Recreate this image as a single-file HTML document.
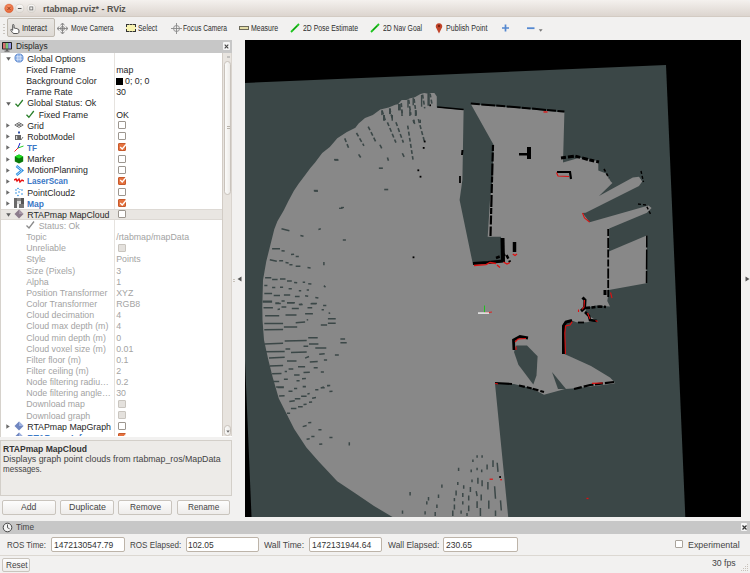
<!DOCTYPE html>
<html><head><meta charset="utf-8">
<style>
*{margin:0;padding:0;box-sizing:border-box}
html,body{width:750px;height:573px;overflow:hidden;background:#F2F1F0;font-family:"Liberation Sans",sans-serif;font-size:9px;color:#3c3c3c}
.a{position:absolute;white-space:nowrap}
.ic{display:block}
#title{left:0;top:0;width:750px;height:16.5px;background:linear-gradient(#F4F1EE,#DCD5CF);border-bottom:1px solid #D3CBC3;border-radius:4px 4px 0 0}
.hdr{background:#C7C7C7}
#tree{left:0;top:53px;width:232px;height:383.5px;background:#fff;border-left:1px solid #D6D2CC;overflow:hidden}
.r{position:absolute;left:0;width:222px;height:12px;line-height:12px;white-space:nowrap}
.t{position:absolute;top:0}
.v{position:absolute;left:116px;top:0}
.g{color:#9b9b9b}
.bl{color:#3d7ac8;font-weight:bold}
.cb{position:absolute;left:118px;width:8px;height:8px;border:1px solid #9C968F;background:#fff;border-radius:1px;top:2px}
.cbd{border-color:#C9C5BF;background:#E4E1DD}
.cbc{background:#E5723F;border-color:#C65A2C}
.arr{position:absolute;left:6px;top:3.5px;width:0;height:0;border-left:3.5px solid #6b6b6b;border-top:2.5px solid transparent;border-bottom:2.5px solid transparent}
.arrd{position:absolute;left:5px;top:4.5px;width:0;height:0;border-top:3.5px solid #6b6b6b;border-left:2.5px solid transparent;border-right:2.5px solid transparent}
.btn{position:absolute;height:15px;border:1px solid #C9C4BD;border-radius:2px;background:linear-gradient(#FDFDFD,#EEECEA);text-align:center;line-height:13px;font-size:9px}
.inp{position:absolute;height:14.5px;border:1px solid #BDB4A9;border-radius:2px;background:#fff;line-height:12.5px;padding-left:3px;font-size:9px}
.tb{position:absolute;top:17px;height:23px;line-height:23px;font-size:9px;color:#3c3c3c}
</style></head><body>
<div id="title" class="a">
  <svg class="a" style="left:0;top:0" width="40" height="17" viewBox="0 0 40 17">
    <defs><linearGradient id="gb" x1="0" y1="0" x2="0" y2="1"><stop offset="0" stop-color="#FBFAF9"/><stop offset="1" stop-color="#E2DFDA"/></linearGradient>
    <radialGradient id="go" cx="0.45" cy="0.35" r="0.7"><stop offset="0" stop-color="#F7956A"/><stop offset="1" stop-color="#E35D2E"/></radialGradient></defs>
    <circle cx="9" cy="8.4" r="4.3" fill="url(#go)" stroke="#D4582E" stroke-width="0.4"/>
    <path d="M7.4 6.8 L10.6 10 M10.6 6.8 L7.4 10" stroke="#8E3A1A" stroke-width="0.9"/>
    <circle cx="19.7" cy="8.4" r="4.1" fill="url(#gb)" stroke="#CFCAC3" stroke-width="0.6"/>
    <path d="M17.9 8.5 L21.5 8.5" stroke="#555" stroke-width="1"/>
    <circle cx="31.3" cy="8.4" r="4.1" fill="url(#gb)" stroke="#CFCAC3" stroke-width="0.6"/>
    <rect x="29.8" y="6.9" width="3" height="3" fill="none" stroke="#6a6a6a" stroke-width="0.8"/>
  </svg>
</div>
  </div>
<div class="a" style="left:3px;top:24px;width:2px;height:10px;background:repeating-linear-gradient(#C9C5BF 0 1px,transparent 1px 3px)"></div>
<div class="a" style="left:7.3px;top:18px;width:47.4px;height:19px;border:1px solid #BEB8AF;border-radius:2px;background:linear-gradient(#E9E7E4,#DEDAD5)"></div>
<svg class="a" style="left:10px;top:24px" width="10" height="10" viewBox="0 0 10 10"><path d="M2.8 0.6 C3.4 0.3 4 0.6 4 1.2 L4 4.2 L4.6 4 C5.1 3.8 5.6 4.1 5.6 4.5 L6.1 4.4 C6.6 4.3 7.1 4.6 7.1 5 L7.5 5 C8.1 5 8.9 5.3 8.9 6 L8.9 8 C8.9 9 8.2 9.5 7.2 9.5 L4 9.5 C3.2 9.5 2.6 9 2.3 8.4 L0.8 6.2 C0.5 5.7 1 5.2 1.5 5.5 L2.7 6.3 L2.7 1.2 Z" fill="#fff" stroke="#3a3a3a" stroke-width="0.85"/></svg>
<svg class="a" style="left:57px;top:23px" width="11" height="11" viewBox="0 0 11 11"><path d="M5.5 0.5 L5.5 10.5 M0.5 5.5 L10.5 5.5" stroke="#777" stroke-width="0.8"/><path d="M3.5 2 L5.5 0.3 L7.5 2 M3.5 9 L5.5 10.7 L7.5 9 M2 3.5 L0.3 5.5 L2 7.5 M9 3.5 L10.7 5.5 L9 7.5" stroke="#666" stroke-width="0.9" fill="none"/><circle cx="5.5" cy="5.5" r="2" fill="none" stroke="#777" stroke-width="0.8"/></svg>
<div class="a" style="left:126px;top:23.5px;width:10px;height:8.5px;background:#F8F3B0;border:1px dashed #333"></div>
<svg class="a" style="left:171px;top:23px" width="11" height="11" viewBox="0 0 11 11"><path d="M5.5 0 L5.5 11 M0 5.5 L11 5.5" stroke="#888" stroke-width="0.9"/><circle cx="5.5" cy="5.5" r="3" fill="none" stroke="#888" stroke-width="0.9"/></svg>
<div class="a" style="left:239px;top:26px;width:10px;height:4px;background:#E4DDA8;border:1px solid #6d6a5a"></div>
<svg class="a" style="left:290px;top:23px" width="10" height="10" viewBox="0 0 10 10"><path d="M1 9 L9 1" stroke="#1ec41e" stroke-width="1.8"/><path d="M3 7 L7 3" stroke="#0a800a" stroke-width="0.8"/></svg>
<svg class="a" style="left:370px;top:23px" width="10" height="10" viewBox="0 0 10 10"><path d="M1 9 L9 1" stroke="#1ec41e" stroke-width="1.8"/><path d="M3 7 L7 3" stroke="#0a800a" stroke-width="0.8"/></svg>
<svg class="a" style="left:434.5px;top:22px" width="8" height="12" viewBox="0 0 8 12"><path d="M4 11.5 L1 5.5 A3.2 3.2 0 1 1 7 5.5 Z" fill="#C2452A"/><circle cx="4" cy="4" r="1.2" fill="#7a2010"/></svg>
<svg class="a" style="left:500.5px;top:24px" width="9" height="8" viewBox="0 0 9 8"><path d="M4.5 0.6 L4.5 7.4 M1 4 L8 4" stroke="#5588d0" stroke-width="1.7"/></svg>
<svg class="a" style="left:526px;top:26px" width="18" height="8" viewBox="0 0 18 8"><path d="M1 2.2 L8.5 2.2" stroke="#5588d0" stroke-width="1.8"/><path d="M12.8 3.2 L16.6 3.2 L14.7 5.8Z" fill="#777"/></svg>

<div class="a hdr" style="left:0;top:40px;width:232px;height:13px"></div>
<div id="tree" class="a"></div>
<div class="a" style="left:0;top:53px;width:222px;height:383.3px;overflow:hidden"><div class="a" style="left:0;top:-53px;width:222px;height:573px">
<div class="a" style="left:114.2px;top:53px;width:1px;height:384px;background:#E6E3DF"></div>
<svg class="a" style="left:5.5px;top:57.00px" width="5" height="4" viewBox="0 0 5 4"><path d="M0.2 0.3 L4.8 0.3 L2.5 3.7Z" fill="#5e5e5e"/></svg>
<div class="a" style="left:13.5px;top:53.20px"><svg class="ic" width="10" height="10" viewBox="0 0 10 10"><circle cx="5" cy="5" r="4.1" fill="#7aa3e0"/><path d="M1.5 3.5 H8.5 M1.2 5 H8.8 M1.5 6.5 H8.5 M3.5 1.3 V8.7 M5 1 V9 M6.5 1.3 V8.7" stroke="#dde8f8" stroke-width="0.6"/><circle cx="5" cy="5" r="4.1" fill="none" stroke="#5a86cc" stroke-width="0.8"/></svg></div>
<div class="a" style="left:116.3px;top:77.50px;width:7px;height:7px;background:#000"></div>
<svg class="a" style="left:5.5px;top:101.60px" width="5" height="4" viewBox="0 0 5 4"><path d="M0.2 0.3 L4.8 0.3 L2.5 3.7Z" fill="#5e5e5e"/></svg>
<div class="a" style="left:13.5px;top:97.80px"><svg class="ic" width="10" height="10" viewBox="0 0 10 10"><path d="M1.5 5.8 L3.9 8.3 L8.8 2" stroke="#2a7f2a" stroke-width="1.3" fill="none"/></svg></div>
<div class="a" style="left:25px;top:108.95px"><svg class="ic" width="10" height="10" viewBox="0 0 10 10"><path d="M1.5 5.8 L3.9 8.3 L8.8 2" stroke="#2a7f2a" stroke-width="1.3" fill="none"/></svg></div>
<svg class="a" style="left:6px;top:123.10px" width="4" height="5" viewBox="0 0 4 5"><path d="M0.3 0.2 L0.3 4.8 L3.8 2.5Z" fill="#6a6a6a"/></svg>
<div class="a" style="left:13.5px;top:120.10px"><svg class="ic" width="10" height="10" viewBox="0 0 10 10"><path d="M0.8 5 L5 2.6 L9.2 5 L5 7.4 Z M2.9 3.8 L7.1 6.2 M7.1 3.8 L2.9 6.2" stroke="#4a4a4a" stroke-width="0.8" fill="none"/></svg></div>
<div class="a cb" style="top:121.10px"></div>
<svg class="a" style="left:6px;top:134.25px" width="4" height="5" viewBox="0 0 4 5"><path d="M0.3 0.2 L0.3 4.8 L3.8 2.5Z" fill="#6a6a6a"/></svg>
<div class="a" style="left:13.5px;top:131.25px"><svg class="ic" width="10" height="10" viewBox="0 0 10 10"><rect x="4" y="0.5" width="2" height="2" fill="#3355aa"/><rect x="1" y="4" width="6" height="5" fill="#666"/><rect x="2" y="5" width="1.2" height="3" fill="#ddd"/><path d="M7 9 L9 6" stroke="#555" stroke-width="0.8"/></svg></div>
<div class="a cb" style="top:132.25px"></div>
<svg class="a" style="left:6px;top:145.40px" width="4" height="5" viewBox="0 0 4 5"><path d="M0.3 0.2 L0.3 4.8 L3.8 2.5Z" fill="#6a6a6a"/></svg>
<div class="a" style="left:13.5px;top:142.40px"><svg class="ic" width="10" height="10" viewBox="0 0 10 10"><path d="M4 6 L0.5 9.5" stroke="#e22" stroke-width="1"/><path d="M4 6 L9.5 4" stroke="#2c2" stroke-width="1"/><path d="M4 6 L6 1" stroke="#22c" stroke-width="1"/></svg></div>
<div class="a cb cbc" style="top:143.40px"><svg width="8" height="8" viewBox="0 0 8 8" style="position:absolute;left:-0.5px;top:-1.5px"><path d="M1.2 4 L3.2 6 L7.5 1" stroke="#fff" stroke-width="1.3" fill="none"/></svg></div>
<svg class="a" style="left:6px;top:156.55px" width="4" height="5" viewBox="0 0 4 5"><path d="M0.3 0.2 L0.3 4.8 L3.8 2.5Z" fill="#6a6a6a"/></svg>
<div class="a" style="left:13.5px;top:153.55px"><svg class="ic" width="10" height="10" viewBox="0 0 10 10"><path d="M5 0.5 L9.2 2.5 L9.2 7.5 L5 9.5 L0.8 7.5 L0.8 2.5Z" fill="#0a7a0a"/><path d="M5 0.5 L9.2 2.5 L5 4.5 L0.8 2.5Z" fill="#22e022"/></svg></div>
<div class="a cb" style="top:154.55px"></div>
<svg class="a" style="left:6px;top:167.70px" width="4" height="5" viewBox="0 0 4 5"><path d="M0.3 0.2 L0.3 4.8 L3.8 2.5Z" fill="#6a6a6a"/></svg>
<div class="a" style="left:13.5px;top:164.70px"><svg class="ic" width="10" height="11" viewBox="0 0 10 11"><path d="M2.5 1 L8 5.5 L2.5 10" stroke="#2a8ee0" stroke-width="2.6" fill="none"/><path d="M2.5 1 L8 5.5 L2.5 10" stroke="#bfe0fa" stroke-width="0.9" fill="none"/></svg></div>
<div class="a cb" style="top:165.70px"></div>
<svg class="a" style="left:6px;top:178.85px" width="4" height="5" viewBox="0 0 4 5"><path d="M0.3 0.2 L0.3 4.8 L3.8 2.5Z" fill="#6a6a6a"/></svg>
<div class="a" style="left:13.5px;top:175.85px"><svg class="ic" width="10" height="10" viewBox="0 0 10 10"><path d="M0 4 L2 3 L3 5 L5 3 L6 6 L8 4 L10 5" stroke="#e81010" stroke-width="1.4" fill="none"/></svg></div>
<div class="a cb cbc" style="top:176.85px"><svg width="8" height="8" viewBox="0 0 8 8" style="position:absolute;left:-0.5px;top:-1.5px"><path d="M1.2 4 L3.2 6 L7.5 1" stroke="#fff" stroke-width="1.3" fill="none"/></svg></div>
<svg class="a" style="left:6px;top:190.00px" width="4" height="5" viewBox="0 0 4 5"><path d="M0.3 0.2 L0.3 4.8 L3.8 2.5Z" fill="#6a6a6a"/></svg>
<div class="a" style="left:13.5px;top:187.00px"><svg class="ic" width="10" height="10" viewBox="0 0 10 10" fill="#2a8ee0"><circle cx="2" cy="3" r="0.8"/><circle cx="4" cy="1.5" r="0.8"/><circle cx="2" cy="6" r="0.8"/><circle cx="5" cy="5" r="0.8"/><circle cx="8" cy="3" r="0.8"/><circle cx="8" cy="7" r="0.8"/><circle cx="4" cy="8.5" r="0.8"/><circle cx="6" cy="2.5" r="0.6"/></svg></div>
<div class="a cb" style="top:188.00px"></div>
<svg class="a" style="left:6px;top:201.15px" width="4" height="5" viewBox="0 0 4 5"><path d="M0.3 0.2 L0.3 4.8 L3.8 2.5Z" fill="#6a6a6a"/></svg>
<div class="a" style="left:13.5px;top:198.15px"><svg class="ic" width="10" height="10" viewBox="0 0 10 10"><rect x="0" y="0" width="10" height="10" fill="#d8d8d8"/><rect x="0" y="0" width="3" height="10" fill="#6a6a6a"/><rect x="3" y="0" width="4" height="3" fill="#8a8a8a"/><rect x="7" y="0" width="3" height="6" fill="#555"/><rect x="3" y="6" width="2" height="4" fill="#f4f4f4"/><rect x="5" y="6" width="5" height="4" fill="#777"/></svg></div>
<div class="a cb cbc" style="top:199.15px"><svg width="8" height="8" viewBox="0 0 8 8" style="position:absolute;left:-0.5px;top:-1.5px"><path d="M1.2 4 L3.2 6 L7.5 1" stroke="#fff" stroke-width="1.3" fill="none"/></svg></div>
<div class="a" style="left:1px;top:209.30px;width:221px;height:11.2px;background:#E9E6E2;border-top:1px solid #DDD9D4;border-bottom:1px solid #DDD9D4"></div>
<svg class="a" style="left:5.5px;top:213.10px" width="5" height="4" viewBox="0 0 5 4"><path d="M0.2 0.3 L4.8 0.3 L2.5 3.7Z" fill="#5e5e5e"/></svg>
<div class="a" style="left:13.5px;top:209.30px"><svg class="ic" width="10" height="10" viewBox="0 0 10 10"><path d="M5 0.5 L9.5 5 L5 9.5 L0.5 5Z" fill="#8b7b8b"/><path d="M5 0.5 L9.5 5 L5 5 Z" fill="#a898a8"/></svg></div>
<div class="a cb" style="top:210.30px"></div>
<div class="a" style="left:25px;top:220.45px"><svg class="ic" width="10" height="10" viewBox="0 0 10 10"><path d="M1.5 5.5 L4 8 L9 1.5" stroke="#8a8a8a" stroke-width="1.3" fill="none"/></svg></div>
<div class="a cb cbd" style="top:243.75px"></div>
<div class="a cb cbd" style="top:399.85px"></div>
<div class="a cb cbd" style="top:411.00px"></div>
<svg class="a" style="left:6px;top:424.15px" width="4" height="5" viewBox="0 0 4 5"><path d="M0.3 0.2 L0.3 4.8 L3.8 2.5Z" fill="#6a6a6a"/></svg>
<div class="a" style="left:13.5px;top:421.15px"><svg class="ic" width="10" height="10" viewBox="0 0 10 10"><path d="M5 0.5 L9.5 5 L5 9.5 L0.5 5Z" fill="#6f86c0"/><path d="M5 0.5 L9.5 5 L5 5 Z" fill="#9fb2e0"/></svg></div>
<div class="a cb" style="top:422.15px"></div>
<svg class="a" style="left:5.5px;top:436.10px" width="5" height="4" viewBox="0 0 5 4"><path d="M0.2 0.3 L4.8 0.3 L2.5 3.7Z" fill="#5e5e5e"/></svg>
<div class="a" style="left:13.5px;top:432.30px"><svg class="ic" width="10" height="10" viewBox="0 0 10 10"><path d="M5 0.5 L9.5 5 L5 9.5 L0.5 5Z" fill="#6f86c0"/><path d="M5 0.5 L9.5 5 L5 5 Z" fill="#9fb2e0"/></svg></div>
<div class="a cb cbc" style="top:433.30px"><svg width="8" height="8" viewBox="0 0 8 8" style="position:absolute;left:-0.5px;top:-1.5px"><path d="M1.2 4 L3.2 6 L7.5 1" stroke="#fff" stroke-width="1.3" fill="none"/></svg></div>
<div class="a" style="left:27.2px;top:54.75px;font-size:8.8px;line-height:8.8px;color:#262626;">Global Options</div>
<div class="a" style="left:26.2px;top:65.90px;font-size:8.8px;line-height:8.8px;color:#262626;">Fixed Frame</div>
<div class="a" style="left:116.2px;top:65.90px;font-size:8.8px;line-height:8.8px;color:#262626;">map</div>
<div class="a" style="left:26.2px;top:77.05px;font-size:8.8px;line-height:8.8px;color:#262626;">Background Color</div>
<div class="a" style="left:125px;top:77.05px;font-size:8.8px;line-height:8.8px;color:#262626;">0; 0; 0</div>
<div class="a" style="left:26.2px;top:88.20px;font-size:8.8px;line-height:8.8px;color:#262626;">Frame Rate</div>
<div class="a" style="left:116.2px;top:88.20px;font-size:8.8px;line-height:8.8px;color:#262626;">30</div>
<div class="a" style="left:27.2px;top:99.35px;font-size:8.8px;line-height:8.8px;color:#262626;">Global Status: Ok</div>
<div class="a" style="left:38.7px;top:110.50px;font-size:8.8px;line-height:8.8px;color:#262626;">Fixed Frame</div>
<div class="a" style="left:116.2px;top:110.50px;font-size:8.8px;line-height:8.8px;color:#262626;">OK</div>
<div class="a" style="left:27.2px;top:121.65px;font-size:8.8px;line-height:8.8px;color:#262626;">Grid</div>
<div class="a" style="left:27.2px;top:132.80px;font-size:8.8px;line-height:8.8px;color:#262626;">RobotModel</div>
<div class="a" style="left:27.2px;top:143.95px;font-size:8.8px;line-height:8.8px;font-weight:bold;color:#3b78c6;transform:scaleX(0.9302);transform-origin:0 0;">TF</div>
<div class="a" style="left:27.2px;top:155.10px;font-size:8.8px;line-height:8.8px;color:#262626;">Marker</div>
<div class="a" style="left:27.2px;top:166.25px;font-size:8.8px;line-height:8.8px;color:#262626;">MotionPlanning</div>
<div class="a" style="left:27.2px;top:177.40px;font-size:8.8px;line-height:8.8px;font-weight:bold;color:#3b78c6;transform:scaleX(0.9213);transform-origin:0 0;">LaserScan</div>
<div class="a" style="left:27.2px;top:188.55px;font-size:8.8px;line-height:8.8px;color:#262626;">PointCloud2</div>
<div class="a" style="left:27.2px;top:199.70px;font-size:8.8px;line-height:8.8px;font-weight:bold;color:#3b78c6;transform:scaleX(0.9654);transform-origin:0 0;">Map</div>
<div class="a" style="left:27.2px;top:210.85px;font-size:8.8px;line-height:8.8px;color:#262626;">RTAPmap MapCloud</div>
<div class="a" style="left:38.7px;top:222.00px;font-size:8.8px;line-height:8.8px;color:#a3a3a3;">Status: Ok</div>
<div class="a" style="left:26.2px;top:233.15px;font-size:8.8px;line-height:8.8px;color:#a3a3a3;">Topic</div>
<div class="a" style="left:116.2px;top:233.15px;font-size:8.8px;line-height:8.8px;color:#a3a3a3;">/rtabmap/mapData</div>
<div class="a" style="left:26.2px;top:244.30px;font-size:8.8px;line-height:8.8px;color:#a3a3a3;">Unreliable</div>
<div class="a" style="left:26.2px;top:255.45px;font-size:8.8px;line-height:8.8px;color:#a3a3a3;">Style</div>
<div class="a" style="left:116.2px;top:255.45px;font-size:8.8px;line-height:8.8px;color:#a3a3a3;">Points</div>
<div class="a" style="left:26.2px;top:266.60px;font-size:8.8px;line-height:8.8px;color:#a3a3a3;">Size (Pixels)</div>
<div class="a" style="left:116.2px;top:266.60px;font-size:8.8px;line-height:8.8px;color:#a3a3a3;">3</div>
<div class="a" style="left:26.2px;top:277.75px;font-size:8.8px;line-height:8.8px;color:#a3a3a3;">Alpha</div>
<div class="a" style="left:116.2px;top:277.75px;font-size:8.8px;line-height:8.8px;color:#a3a3a3;">1</div>
<div class="a" style="left:26.2px;top:288.90px;font-size:8.8px;line-height:8.8px;color:#a3a3a3;">Position Transformer</div>
<div class="a" style="left:116.2px;top:288.90px;font-size:8.8px;line-height:8.8px;color:#a3a3a3;">XYZ</div>
<div class="a" style="left:26.2px;top:300.05px;font-size:8.8px;line-height:8.8px;color:#a3a3a3;">Color Transformer</div>
<div class="a" style="left:116.2px;top:300.05px;font-size:8.8px;line-height:8.8px;color:#a3a3a3;">RGB8</div>
<div class="a" style="left:26.2px;top:311.20px;font-size:8.8px;line-height:8.8px;color:#a3a3a3;">Cloud decimation</div>
<div class="a" style="left:116.2px;top:311.20px;font-size:8.8px;line-height:8.8px;color:#a3a3a3;">4</div>
<div class="a" style="left:26.2px;top:322.35px;font-size:8.8px;line-height:8.8px;color:#a3a3a3;">Cloud max depth (m)</div>
<div class="a" style="left:116.2px;top:322.35px;font-size:8.8px;line-height:8.8px;color:#a3a3a3;">4</div>
<div class="a" style="left:26.2px;top:333.50px;font-size:8.8px;line-height:8.8px;color:#a3a3a3;">Cloud min depth (m)</div>
<div class="a" style="left:116.2px;top:333.50px;font-size:8.8px;line-height:8.8px;color:#a3a3a3;">0</div>
<div class="a" style="left:26.2px;top:344.65px;font-size:8.8px;line-height:8.8px;color:#a3a3a3;">Cloud voxel size (m)</div>
<div class="a" style="left:116.2px;top:344.65px;font-size:8.8px;line-height:8.8px;color:#a3a3a3;">0.01</div>
<div class="a" style="left:26.2px;top:355.80px;font-size:8.8px;line-height:8.8px;color:#a3a3a3;">Filter floor (m)</div>
<div class="a" style="left:116.2px;top:355.80px;font-size:8.8px;line-height:8.8px;color:#a3a3a3;">0.1</div>
<div class="a" style="left:26.2px;top:366.95px;font-size:8.8px;line-height:8.8px;color:#a3a3a3;">Filter ceiling (m)</div>
<div class="a" style="left:116.2px;top:366.95px;font-size:8.8px;line-height:8.8px;color:#a3a3a3;">2</div>
<div class="a" style="left:26.2px;top:378.10px;font-size:8.8px;line-height:8.8px;color:#a3a3a3;">Node filtering radiu…</div>
<div class="a" style="left:116.2px;top:378.10px;font-size:8.8px;line-height:8.8px;color:#a3a3a3;">0.2</div>
<div class="a" style="left:26.2px;top:389.25px;font-size:8.8px;line-height:8.8px;color:#a3a3a3;">Node filtering angle…</div>
<div class="a" style="left:116.2px;top:389.25px;font-size:8.8px;line-height:8.8px;color:#a3a3a3;">30</div>
<div class="a" style="left:26.2px;top:400.40px;font-size:8.8px;line-height:8.8px;color:#a3a3a3;">Download map</div>
<div class="a" style="left:26.2px;top:411.55px;font-size:8.8px;line-height:8.8px;color:#a3a3a3;">Download graph</div>
<div class="a" style="left:27.2px;top:422.70px;font-size:8.8px;line-height:8.8px;color:#262626;">RTAPmap MapGraph</div>
<div class="a" style="left:27.2px;top:433.85px;font-size:8.8px;line-height:8.8px;font-weight:bold;color:#3b78c6;">RTAPmap Info</div>
</div></div>
<div class="a" style="left:0;top:440px;width:232px;height:55.5px;background:#EDEBE8;border:1px solid #D3CFC9"></div>
<div class="btn" style="left:2px;top:499.5px;width:54px"></div>
<div class="btn" style="left:60px;top:499.5px;width:54px"></div>
<div class="btn" style="left:118.4px;top:499.5px;width:54px"></div>
<div class="btn" style="left:177px;top:499.5px;width:53px"></div>
<div class="a" style="left:245px;top:40px;width:496px;height:476.5px;background:#000;overflow:hidden" id="view">
<svg class="a" style="left:0;top:0" width="496" height="476.5" viewBox="245 40 496 476.5">
<polygon points="233.4,83.5 666,65 688,580 255,600" fill="#3b4747"/>
<polygon points="392.5,517 374,506 355.6,493.6 337.2,481.3 318.7,461.4 306.4,447.5 294.2,429 286.5,413.7 278.8,398.4 272.6,376.9 268,358.4 264,340 262.5,320 262.3,306.7 263,280 266.3,261.3 270.3,245.3 274.3,229.3 277.4,221.3 283.7,210.4 288.4,200.9 293.9,190.7 298.6,183.7 304.1,176.6 310.4,168 315.1,162.5 322.2,153 329.8,146.9 337.3,138.3 346.9,131.9 355.4,127.7 358.6,123.4 365,118.1 372.8,115.1 380.3,109.5 388.7,107.6 395.2,104.8 398,104.3 401.7,100.1 406.4,100.1 410.1,98.3 414.8,97.3 420.4,94.1 424.2,93.1 427,93.6 428.8,93.1 434.4,93.1 436.8,96.4 436.8,107.6 437.2,107.6 463.6,110 462.4,180 459.6,200 473,264.8 502.3,262.3 502.3,258.7 501,236.7 487.7,236.7 490,200 492.4,180 493.6,144.8 470.8,104 564.4,112.4 563,162.6 579.4,157.8 598.3,161 598.3,170.4 606.1,173.5 610.8,181.4 612.4,183 599,196 632.8,177.5 639,176.7 642.2,181.4 639,186.1 585.7,212.8 582.6,213 589.6,222.2 648.5,205.5 651.6,208 647,212.8 609.2,228.5 608.6,293 607.3,301 610,306.5 596,305.5 586.7,307.4 585,313 596,320.5 586.7,322.3 576.5,322.3 571.8,320.5 564.3,322.3 562,327 562,345 564.3,354 571.7,357.3 591,365.9 610,377.6 614.4,382 614.4,383.5 576,388.3 565,389 544,394.7 531.2,388.3 514,384 495,383.5 508.2,517" fill="#888888"/>
<polygon points="608.8,251.6 647.2,235.3 646.2,283.3 608.8,290" fill="#888888"/>
<polygon points="516.3,345.6 527,345.6 537.6,356.3 536.5,375.5 533.3,384.5 518.4,364.8 514,352" fill="#3b4747"/>
<polygon points="552,372 558,389 566,389" fill="#3b4747"/>
<polyline points="382.06666666666666,110.6 385.26666666666665,120.2" fill="none" stroke="#3b4747" stroke-width="1.6" stroke-dasharray="4 2.2" />
<polyline points="389.5333333333333,108.46666666666667 392.73333333333335,120.2" fill="none" stroke="#3b4747" stroke-width="1.6" stroke-dasharray="4 2.2" />
<polyline points="401.26666666666665,103.13333333333333 402.3333333333333,115.93333333333334" fill="none" stroke="#3b4747" stroke-width="1.6" stroke-dasharray="4 2.2" />
<polyline points="408.73333333333335,99.93333333333334 410.8666666666667,114.86666666666667" fill="none" stroke="#3b4747" stroke-width="1.6" stroke-dasharray="4 2.2" />
<polyline points="414.06666666666666,98.86666666666667 416.2,114.86666666666667" fill="none" stroke="#3b4747" stroke-width="1.6" stroke-dasharray="4 2.2" />
<polyline points="422.6,94.6 424.73333333333335,108.46666666666667" fill="none" stroke="#3b4747" stroke-width="1.6" stroke-dasharray="4 2.2" />
<polyline points="430.06666666666666,93.53333333333333 432.2,105.26666666666667" fill="none" stroke="#3b4747" stroke-width="1.6" stroke-dasharray="4 2.2" />
<polyline points="356.4666666666667,133.0 363.93333333333334,145.8" fill="none" stroke="#3b4747" stroke-width="1.6" stroke-dasharray="4 2.2" />
<polyline points="368.2,126.6 375.6666666666667,141.53333333333333" fill="none" stroke="#3b4747" stroke-width="1.6" stroke-dasharray="4 2.2" />
<polyline points="387.4,122.33333333333334 395.93333333333334,142.6" fill="none" stroke="#3b4747" stroke-width="1.6" stroke-dasharray="4 2.2" />
<polyline points="395.93333333333334,122.33333333333334 403.4,142.6" fill="none" stroke="#3b4747" stroke-width="1.6" stroke-dasharray="4 2.2" />
<polyline points="407.6666666666667,125.53333333333333 413.0,159.66666666666669" fill="none" stroke="#3b4747" stroke-width="1.6" stroke-dasharray="4 2.2" />
<polyline points="413.0,120.2 415.1333333333333,124.46666666666667" fill="none" stroke="#3b4747" stroke-width="1.6" stroke-dasharray="4 2.2" />
<polyline points="418.33333333333337,119.13333333333333 424.73333333333335,142.6" fill="none" stroke="#3b4747" stroke-width="1.6" stroke-dasharray="4 2.2" />
<polyline points="344.73333333333335,138.33333333333334 349.0,149.0" fill="none" stroke="#3b4747" stroke-width="1.6" stroke-dasharray="4 2.2" />
<polyline points="379.93333333333334,144.73333333333335 382.06666666666666,149.0" fill="none" stroke="#3b4747" stroke-width="1.6" stroke-dasharray="4 2.2" />
<polyline points="358.6,154.33333333333331 360.73333333333335,157.53333333333333" fill="none" stroke="#3b4747" stroke-width="1.6" stroke-dasharray="4 2.2" />
<polyline points="387.4,157.53333333333333 388.4666666666667,160.73333333333335" fill="none" stroke="#3b4747" stroke-width="1.6" stroke-dasharray="4 2.2" />
<polyline points="402.3333333333333,153.26666666666665 404.4666666666667,157.53333333333333" fill="none" stroke="#3b4747" stroke-width="1.6" stroke-dasharray="4 2.2" />
<polyline points="334.06666666666666,159.66666666666669 338.3333333333333,159.66666666666669" fill="none" stroke="#3b4747" stroke-width="1.6" stroke-dasharray="4 2.2" />
<polyline points="378.8666666666667,168.2 383.1333333333333,168.2" fill="none" stroke="#3b4747" stroke-width="1.6" stroke-dasharray="4 2.2" />
<polyline points="313.8,190.6 318.06666666666666,190.6" fill="none" stroke="#3b4747" stroke-width="1.6" stroke-dasharray="4 2.2" />
<polyline points="384.2,189.53333333333333 388.4666666666667,189.53333333333333" fill="none" stroke="#3b4747" stroke-width="1.6" stroke-dasharray="4 2.2" />
<polyline points="334.7,160.1 338.6,160.1" fill="none" stroke="#3b4747" stroke-width="1.3" />
<polyline points="314.3,191.2 318,191.2" fill="none" stroke="#3b4747" stroke-width="1.3" />
<polyline points="339,208.3 342.6,208.3" fill="none" stroke="#3b4747" stroke-width="1.3" />
<polyline points="341,207.5 344,207.5" fill="none" stroke="#3b4747" stroke-width="1.3" />
<rect x="412.6" y="256.4" width="1.8" height="1.8" fill="#000"/>
<rect x="429.2" y="104.4" width="1.8" height="1.8" fill="#000"/>
<rect x="423.8" y="140.6" width="1.8" height="1.8" fill="#000"/>
<rect x="422.8" y="147.0" width="1.8" height="1.8" fill="#000"/>
<rect x="417.4" y="169.4" width="1.8" height="1.8" fill="#000"/>
<rect x="419.6" y="175.8" width="1.8" height="1.8" fill="#000"/>
<rect x="398" y="104" width="2.8" height="6.4" fill="#3b4747"/>
<rect x="407.3" y="99.5" width="1.4" height="8.1" fill="#3b4747"/>
<rect x="412.5" y="97.5" width="1.4" height="7.8" fill="#3b4747"/>
<rect x="420.9" y="95" width="1.4" height="11.7" fill="#3b4747"/>
<rect x="427.4" y="93" width="2.4" height="12.7" fill="#3b4747"/>
<rect x="381.2" y="110.4" width="1.4" height="4.7" fill="#3b4747"/>
<rect x="389" y="108.5" width="2.0" height="5.6" fill="#3b4747"/>
<rect x="383" y="115" width="2.0" height="5.7" fill="#3b4747"/>
<rect x="391.5" y="115" width="1.5" height="5.7" fill="#3b4747"/>
<rect x="401.3" y="110.4" width="1.4" height="5.6" fill="#3b4747"/>
<rect x="409.2" y="110" width="1.4" height="6.0" fill="#3b4747"/>
<rect x="414.8" y="110" width="1.9" height="6.0" fill="#3b4747"/>
<rect x="413" y="119.7" width="1.8" height="3.3" fill="#3b4747"/>
<rect x="419.5" y="119.7" width="1.5" height="3.3" fill="#3b4747"/>
<polyline points="470.8,103.6 520,107.5 564.4,111.6" fill="none" stroke="#000" stroke-width="2.0" stroke-dasharray="9 1.5 14 1" />
<polyline points="437.2,106.9 463.6,109.6" fill="none" stroke="#000" stroke-width="1.5" />
<polyline points="493,145 492,180 490.5,236" fill="none" stroke="#000" stroke-width="2.2" stroke-dasharray="6 1.5 9 2 12 1" />
<polyline points="462.5,150 462,155" fill="none" stroke="#000" stroke-width="2" />
<polyline points="460,176 460,183" fill="none" stroke="#000" stroke-width="1.8" />
<polyline points="502.5,238 503,262" fill="none" stroke="#000" stroke-width="4" />
<polyline points="514.5,242 514.5,252" fill="none" stroke="#000" stroke-width="3.5" />
<polyline points="512.8,254 515,255.5 517,254" fill="none" stroke="#e01010" stroke-width="1.3" />
<polyline points="503.5,262 507,264 510,262.5" fill="none" stroke="#e01010" stroke-width="1.3" />
<polyline points="497,265 500,267.5" fill="none" stroke="#e01010" stroke-width="1.3" />
<polyline points="473,263.5 488,262.5 503,261" fill="none" stroke="#000" stroke-width="3.2" />
<polyline points="496,258 506,254 510,262" fill="none" stroke="#000" stroke-width="2.5" stroke-dasharray="4 2" />
<polyline points="474,265.5 486,264.6 490,262.5 496,263.5" fill="none" stroke="#e01010" stroke-width="1.3" />
<polyline points="608.2,229 608.2,298" fill="none" stroke="#000" stroke-width="1.8" stroke-dasharray="7 2 10 1.5 8 2" />
<polyline points="646.8,235.5 646.5,283" fill="none" stroke="#000" stroke-width="1.5" stroke-dasharray="12 2 20 1.5" />
<polyline points="572,320.5 566,322 563.5,326 563.5,354" fill="none" stroke="#000" stroke-width="3" />
<polyline points="572.2,321.6 570,325 565.5,326 564.8,333 565.4,354" fill="none" stroke="#e01010" stroke-width="1.1" />
<polyline points="582.5,297.5 585,300 584.5,308 581,311" fill="none" stroke="#000" stroke-width="3" />
<polyline points="585,308 592,307.5 600,306.5 606,307" fill="none" stroke="#000" stroke-width="2.6" stroke-dasharray="5 1.5 4 2" />
<polyline points="585,312 589,316 590,320 597,321" fill="none" stroke="#000" stroke-width="2.6" />
<polyline points="605,290 605,295" fill="none" stroke="#000" stroke-width="3" />
<polyline points="584.5,300 584,307 582,309.5" fill="none" stroke="#e01010" stroke-width="1.1" />
<polyline points="578.5,309.5 578.5,312" fill="none" stroke="#e01010" stroke-width="1.1" />
<polyline points="587.6,313 590,319" fill="none" stroke="#e01010" stroke-width="1.1" />
<polyline points="595.5,320.5 597.5,321.5" fill="none" stroke="#e01010" stroke-width="1.3" />
<polyline points="578,322.5 584,322.5" fill="none" stroke="#000" stroke-width="1.8" />
<polyline points="610.5,292.5 612,298.2" fill="none" stroke="#e01010" stroke-width="1.1" />
<polyline points="514,350 513.5,340 520,336.5 528,338" fill="none" stroke="#000" stroke-width="2.8" />
<polyline points="515,342 518,339 526,338.5" fill="none" stroke="#e01010" stroke-width="1.1" />
<polyline points="516,346.5 516,350" fill="none" stroke="#e01010" stroke-width="1.1" />
<polyline points="495,383 512,384" fill="none" stroke="#000" stroke-width="2.2" />
<polyline points="495,383.3 498,384" fill="none" stroke="#e01010" stroke-width="1" />
<polyline points="519,385.5 530,388 544,392" fill="none" stroke="#000" stroke-width="2.2" stroke-dasharray="6 2 5 1" />
<polyline points="574,389 590,385 614,382" fill="none" stroke="#000" stroke-width="2.2" stroke-dasharray="8 2 10 1.5" />
<polyline points="592,383.4 602.7,383" fill="none" stroke="#e01010" stroke-width="1.1" />
<polyline points="561,158 575,156 590,160 599,162" fill="none" stroke="#000" stroke-width="3" stroke-dasharray="5 2 6 1.5" />
<polyline points="557,172 570,172 571,179" fill="none" stroke="#000" stroke-width="2.2" />
<polyline points="556.5,172.5 558,176 569,176.5" fill="none" stroke="#e01010" stroke-width="1.1" />
<polyline points="604,169 609,178" fill="none" stroke="#000" stroke-width="1.6" stroke-dasharray="3 2" />
<polyline points="641,171 643.5,182" fill="none" stroke="#000" stroke-width="1.4" stroke-dasharray="3 2" />
<polyline points="638,204 646,205 651,215" fill="none" stroke="#000" stroke-width="1.4" stroke-dasharray="3 2" />
<polyline points="582.5,213 584.5,218 589.6,222.2" fill="none" stroke="#e01010" stroke-width="1.1" />
<rect x="527" y="147" width="4" height="12" fill="#000"/><rect x="519" y="153" width="11" height="2.5" fill="#000"/>
<rect x="543.5" y="111.3" width="4" height="1.3" fill="#e01010"/>
<rect x="586.5" y="497.8" width="2" height="1.3" fill="#e01010"/>
<polyline points="484.5,305.5 484.5,313" fill="none" stroke="#20c020" stroke-width="1" />
<polyline points="484.5,313 492,312" fill="none" stroke="#e02020" stroke-width="1" />
<rect x="478" y="312.3" width="11" height="1.6" fill="#e8e8e8"/>
<path d="M281.5 228.8L289.4 230.7M318.4 229.4L320.8 228.8M300.4 235.4L303.5 236.2M342.8 240.1L345.9 240.1M272.1 248.8L280.0 248.8M281.5 250.8L284.7 251.1M291.0 254.6L294.1 254.2M295.7 256.6L298.8 256.6M269.8 259.7L276.8 261.3M279.2 260.8L283.1 260.8M285.5 262.6L288.6 262.9M289.4 264.8L292.5 264.8M295.7 266.3L300.4 266.3M307.5 267.6L310.6 267.9M323.9 262.1L323.9 265.2M265.1 277.8L271.3 277.8M272.1 279.4L277.6 279.4M280.0 279.1L285.5 279.1M287.0 280.9L291.8 280.9M294.1 282.5L297.2 282.8M302.7 282.2L305.1 282.2M308.2 283.8L311.4 284.1M323.9 285.6L325.5 287.2M264.3 285.6L267.4 285.6M272.1 287.5L275.3 287.5M280.0 287.2L283.1 287.2M288.6 288.8L291.8 288.8M298.8 290.7L301.2 290.7M306.7 290.0L309.0 290.0M264.3 293.5L272.1 293.5M273.7 295.4L280.0 295.4M283.9 295.1L290.2 295.1M294.9 296.6L299.6 296.6M305.1 295.8L308.2 296.3M315.3 297.4L318.4 297.9M262.7 301.3L272.1 301.3M275.3 302.9L279.2 302.9M281.5 301.0L284.7 301.0M287.0 302.9L294.1 302.9M298.8 304.5L302.0 304.2M310.6 303.7L316.1 303.7M262.7 301.9L272.1 301.9M275.3 303.5L280.8 303.5M287.0 302.8L294.9 302.8M299.6 304.7L302.7 304.4M311.4 303.5L316.9 303.5M323.1 305.5L326.3 305.5M263.5 307.8L272.9 307.8M277.6 309.4L280.0 309.1M281.5 307.1L286.3 307.1M291.8 308.6L298.8 308.6M307.5 307.8L312.2 307.8M321.6 309.7L323.9 309.7M328.6 313.3L330.2 312.9M265.1 315.7L279.2 315.7M285.5 314.9L296.5 314.9M305.1 313.8L312.9 313.8M327.9 318.8L335.7 318.8M264.3 323.5L283.1 323.5M295.7 322.8L305.1 322.0M306.7 320.1L308.2 319.6M320.8 325.1L327.1 325.1M327.9 323.2L335.7 323.2M264.3 329.8L283.1 329.5M283.9 327.0L297.2 327.0M308.2 337.7L317.7 337.7M340.4 338.9L345.1 338.9M264.3 344.0L283.1 343.2M284.7 341.1L306.7 340.5M303.5 346.3L308.2 346.3M309.0 344.0L318.4 344.0M315.3 347.9L326.3 347.9M340.4 342.7L346.7 342.7M265.1 351.8L284.7 351.5M285.5 349.0L290.2 349.0M291.0 352.6L306.7 352.1M319.2 354.2L324.7 353.7M334.9 354.9L338.8 354.9M269.0 358.1L284.7 357.3M305.1 358.1L309.0 356.5M287.0 360.9L296.5 360.9M309.8 362.0L317.7 361.5M323.9 360.0L327.1 360.0M269.8 365.9L283.1 365.6M288.6 369.1L293.3 369.1M298.0 366.7L305.1 366.7M313.7 367.8L317.7 367.8M272.1 373.8L281.5 373.5M284.7 371.4L287.0 371.4M294.1 375.0L299.6 375.0M303.5 372.5L309.8 372.2M320.8 371.9L323.9 371.9M272.9 381.6L279.2 381.6M283.9 379.3L287.8 379.3M296.5 380.8L299.6 380.8M302.0 378.8L305.9 378.5M276.1 387.1L283.9 387.1M302.7 386.7L305.9 386.7M320.8 387.9L323.9 387.1M327.1 385.6L330.2 385.6M277.6 387.4L283.8 387.4M288.5 391.3L292.5 391.3M294.0 388.5L297.2 388.5M302.7 386.6L305.8 386.6M315.2 389.7L318.4 389.7M320.7 387.8L324.7 387.8M327.0 385.8L329.4 385.8M329.4 391.6L332.5 391.3M279.1 396.0L284.6 395.7M301.1 396.3L306.6 396.3M307.4 394.1L309.7 393.6M294.8 398.8L300.3 398.8M289.3 401.5L294.8 400.7M312.1 398.3L316.0 397.6M309.0 402.3L312.1 402.0M290.9 408.5L296.4 408.5M298.0 406.7L302.7 406.7M303.5 404.6L306.6 404.2M287.0 413.3L290.1 413.3M302.7 426.6L306.6 425.5M308.2 422.7L311.3 422.4M318.4 429.7L321.5 429.7M306.6 439.2L309.7 438.7M311.3 436.5L314.5 436.5M329.4 437.6L332.5 437.6M319.2 444.3L322.3 443.9M349.3 442.3L349.3 445.4M477.1 455.2L477.1 457.7M482.1 455.2L482.1 457.7M472.9 459.4L472.9 461.9M493.0 460.2L493.0 466.9M487.1 464.4L487.1 469.4M497.2 462.7L498.0 471.9M458.6 467.7L458.6 471.1M471.2 469.4L471.2 472.3M477.1 467.7L477.1 470.3M481.7 469.4L481.7 472.3M477.9 477.8L477.9 483.7M482.1 480.3L482.1 486.2M487.9 482.0L487.9 489.5M472.0 479.5L472.0 482.3M457.8 482.0L457.8 485.0M441.9 484.5L441.9 487.8M463.7 485.3L463.7 488.7M494.6 486.2L495.5 498.7M410.1 492.0L410.1 495.4M438.5 494.5L438.5 497.9M456.1 490.4L456.1 495.4M462.8 492.9L462.8 497.1M470.4 487.0L470.4 492.0M476.2 491.2L477.1 496.2M481.2 494.5L481.2 500.4M428.5 497.1L428.5 500.4M426.8 501.2L426.8 504.6M436.9 504.6L436.9 507.9M454.4 497.9L454.4 501.2M454.4 504.6L454.4 509.6M462.8 501.2L462.8 504.6M468.7 495.4L468.7 500.4M468.7 505.4L468.7 511.3M477.1 501.2L477.1 507.9M488.8 500.4L488.8 508.8M500.5 500.4L501.3 510.5M402.5 510.5L402.5 513.8M425.1 511.3L425.1 514.6M435.2 512.1L435.2 516.0M452.8 510.5L452.8 516.0M461.1 510.5L461.1 513.8M467.0 513.0L467.0 516.0M480.4 507.9L480.4 516.0M495.5 510.5L495.5 516.0" stroke="#3b4747" stroke-width="1.5" fill="none"/>
<rect x="489.6" y="478.6" width="3.3" height="1.2" fill="#e01010"/>
<rect x="500.2" y="479.1" width="1.8" height="1.2" fill="#e01010"/>
<rect x="499.2" y="476.1" width="1.8" height="1.8" fill="#000"/>
</svg>
</div>
<div class="a hdr" style="left:0;top:521px;width:750px;height:12.7px"></div>

<div class="a" style="left:0;top:555px;width:750px;height:1px;background:#DCD8D2"></div>
<div class="inp" style="left:51.1px;top:537.3px;width:74.2px"></div>
<div class="inp" style="left:185.6px;top:537.3px;width:73.9px"></div>
<div class="inp" style="left:309.2px;top:537.3px;width:73.3px"></div>
<div class="inp" style="left:443.2px;top:537.3px;width:74.4px"></div>
<div class="a" style="left:675px;top:540px;width:8px;height:8.4px;border:1px solid #A9A39B;border-radius:1px;background:#fff"></div>
<div class="btn" style="left:2.4px;top:558.2px;width:28.1px;height:13.7px"></div>
<svg class="a" style="left:2px;top:522px" width="11" height="11" viewBox="0 0 11 11"><circle cx="5.5" cy="5.5" r="4.3" fill="#f4f4f4" stroke="#444" stroke-width="1"/><path d="M5.5 2.5 L5.5 5.7 L7.6 6.8" stroke="#444" stroke-width="0.9" fill="none"/></svg>
<div class="a" style="left:740.8px;top:523px;width:6.6px;height:8px;background:#F6F6F6;border-radius:1px"></div>
<svg class="a" style="left:741.5px;top:524.5px" width="5" height="5" viewBox="0 0 5 5"><path d="M0.5 0.5 L4.5 4.5 M4.5 0.5 L0.5 4.5" stroke="#333" stroke-width="1.2"/></svg>
<div class="a" style="left:222.6px;top:42.2px;width:7.1px;height:7.9px;background:#F6F6F6;border-radius:1px"></div>
<svg class="a" style="left:223.7px;top:43.7px" width="5" height="5" viewBox="0 0 5 5"><path d="M0.7 0.7 L4.3 4.3 M4.3 0.7 L0.7 4.3" stroke="#444" stroke-width="1.1"/></svg>
<svg class="a" style="left:2px;top:42px" width="10" height="10" viewBox="0 0 10 10"><rect x="0" y="0" width="10" height="7.6" rx="0.8" fill="#222"/><rect x="1" y="1" width="2.7" height="5.6" fill="#d87070"/><rect x="3.7" y="1" width="2.6" height="5.6" fill="#78c878"/><rect x="6.3" y="1" width="2.7" height="5.6" fill="#9898e8"/><rect x="4" y="7.6" width="2" height="1" fill="#333"/><rect x="2.5" y="8.6" width="5" height="1" fill="#555"/></svg>
<div class="a" style="left:222.3px;top:53px;width:9.5px;height:383px;background:#E8E4DF;border-left:1px solid #D2CCC5;border-right:1px solid #D9D4CE"></div>
<div class="a" style="left:224.4px;top:60.5px;width:7px;height:134.3px;border:1px solid #C9C3BC;border-radius:3.5px;background:linear-gradient(90deg,#FBFBFA,#EDEBE8)"></div>
<div class="a" style="left:224.4px;top:425px;width:7px;height:10.5px;border:1px solid #C9C3BC;border-radius:3.5px;background:linear-gradient(90deg,#FBFBFA,#EDEBE8)"></div><svg class="a" style="left:226px;top:430px" width="4" height="3" viewBox="0 0 4 3"><path d="M0.3 0.5 L3.7 0.5 L2 2.7Z" fill="#666"/></svg>
<svg class="a" style="left:225.5px;top:54px" width="5" height="5" viewBox="0 0 5 5"><path d="M1 3 L4 3" stroke="#888" stroke-width="0.8"/></svg>
<svg class="a" style="left:237px;top:276px" width="5" height="6" viewBox="0 0 5 6"><path d="M4.5 0.5 L0.5 3 L4.5 5.5Z" fill="#555"/></svg>
<svg class="a" style="left:744.5px;top:276px" width="5" height="6" viewBox="0 0 5 6"><path d="M0.5 0.5 L4.5 3 L0.5 5.5Z" fill="#555"/></svg>
<div class="a" style="left:226.5px;top:125.5px;width:3px;height:0.8px;background:#B9B3AB"></div>
<div class="a" style="left:226.5px;top:127.5px;width:3px;height:0.8px;background:#B9B3AB"></div>
<div class="a" style="left:233px;top:278.5px;width:2px;height:0.8px;background:#C9C3BB"></div>
<div class="a" style="left:233px;top:280.5px;width:2px;height:0.8px;background:#C9C3BB"></div>
<svg class="a" style="left:739px;top:562px" width="10" height="10" viewBox="0 0 10 10" fill="#C8C2BA"><rect x="8" y="2" width="1" height="1"/><rect x="6" y="4" width="1" height="1"/><rect x="8" y="4" width="1" height="1"/><rect x="4" y="6" width="1" height="1"/><rect x="6" y="6" width="1" height="1"/><rect x="8" y="6" width="1" height="1"/><rect x="2" y="8" width="1" height="1"/><rect x="4" y="8" width="1" height="1"/><rect x="6" y="8" width="1" height="1"/><rect x="8" y="8" width="1" height="1"/></svg>

<div class="a" style="left:21.8px;top:23.77px;font-size:8.3px;line-height:8.3px;color:#262626;transform:scaleX(0.9107);transform-origin:0 0;">Interact</div>
<div class="a" style="left:70.8px;top:23.77px;font-size:8.3px;line-height:8.3px;color:#2e2e2e;transform:scaleX(0.8175);transform-origin:0 0;">Move Camera</div>
<div class="a" style="left:138.3px;top:23.77px;font-size:8.3px;line-height:8.3px;color:#2e2e2e;transform:scaleX(0.8325);transform-origin:0 0;">Select</div>
<div class="a" style="left:183px;top:23.77px;font-size:8.3px;line-height:8.3px;color:#2e2e2e;transform:scaleX(0.8085);transform-origin:0 0;">Focus Camera</div>
<div class="a" style="left:250.8px;top:23.77px;font-size:8.3px;line-height:8.3px;color:#2e2e2e;transform:scaleX(0.8426);transform-origin:0 0;">Measure</div>
<div class="a" style="left:303px;top:23.77px;font-size:8.3px;line-height:8.3px;color:#2e2e2e;transform:scaleX(0.8282);transform-origin:0 0;">2D Pose Estimate</div>
<div class="a" style="left:382.5px;top:23.77px;font-size:8.3px;line-height:8.3px;color:#2e2e2e;transform:scaleX(0.8211);transform-origin:0 0;">2D Nav Goal</div>
<div class="a" style="left:446px;top:23.77px;font-size:8.3px;line-height:8.3px;color:#2e2e2e;transform:scaleX(0.8568);transform-origin:0 0;">Publish Point</div>
<div class="a" style="left:42.6px;top:4.82px;font-size:8.6px;line-height:8.6px;font-weight:bold;color:#55524e;transform:scaleX(1.0298);transform-origin:0 0;">rtabmap.rviz* - RViz</div>
<div class="a" style="left:15.6px;top:42.01px;font-size:9.2px;line-height:9.2px;color:#262626;transform:scaleX(0.9102);transform-origin:0 0;">Displays</div>
<div class="a" style="left:3.3px;top:444.75px;font-size:8.8px;line-height:8.8px;font-weight:bold;color:#333;transform:scaleX(0.9729);transform-origin:0 0;">RTAPmap MapCloud</div>
<div class="a" style="left:3.3px;top:454.75px;font-size:8.8px;line-height:8.8px;color:#444;transform:scaleX(1.0005);transform-origin:0 0;">Displays graph point clouds from rtabmap_ros/MapData</div>
<div class="a" style="left:3.3px;top:464.75px;font-size:8.8px;line-height:8.8px;color:#444;transform:scaleX(0.9119);transform-origin:0 0;">messages.</div>
<div class="a" style="left:20.9px;top:502.55px;font-size:8.8px;line-height:8.8px;color:#444;transform:scaleX(0.9836);transform-origin:0 0;">Add</div>
<div class="a" style="left:68.5px;top:502.55px;font-size:8.8px;line-height:8.8px;color:#444;transform:scaleX(1.0085);transform-origin:0 0;">Duplicate</div>
<div class="a" style="left:129.6px;top:502.55px;font-size:8.8px;line-height:8.8px;color:#444;transform:scaleX(0.9522);transform-origin:0 0;">Remove</div>
<div class="a" style="left:187.8px;top:502.55px;font-size:8.8px;line-height:8.8px;color:#444;transform:scaleX(0.9439);transform-origin:0 0;">Rename</div>
<div class="a" style="left:15.6px;top:522.88px;font-size:9px;line-height:9px;color:#444;transform:scaleX(0.9150);transform-origin:0 0;">Time</div>
<div class="a" style="left:6.7px;top:541.25px;font-size:8.8px;line-height:8.8px;color:#444;transform:scaleX(0.9043);transform-origin:0 0;">ROS Time:</div>
<div class="a" style="left:54px;top:541.25px;font-size:8.8px;line-height:8.8px;color:#333;transform:scaleX(0.9696);transform-origin:0 0;">1472130547.79</div>
<div class="a" style="left:129.6px;top:541.25px;font-size:8.8px;line-height:8.8px;color:#444;transform:scaleX(0.9184);transform-origin:0 0;">ROS Elapsed:</div>
<div class="a" style="left:188px;top:541.25px;font-size:8.8px;line-height:8.8px;color:#333;transform:scaleX(0.9552);transform-origin:0 0;">102.05</div>
<div class="a" style="left:263.6px;top:541.25px;font-size:8.8px;line-height:8.8px;color:#444;transform:scaleX(0.9844);transform-origin:0 0;">Wall Time:</div>
<div class="a" style="left:312px;top:541.25px;font-size:8.8px;line-height:8.8px;color:#333;transform:scaleX(0.9680);transform-origin:0 0;">1472131944.64</div>
<div class="a" style="left:387.5px;top:541.25px;font-size:8.8px;line-height:8.8px;color:#444;transform:scaleX(0.9613);transform-origin:0 0;">Wall Elapsed:</div>
<div class="a" style="left:446px;top:541.25px;font-size:8.8px;line-height:8.8px;color:#333;transform:scaleX(0.9663);transform-origin:0 0;">230.65</div>
<div class="a" style="left:688px;top:541.25px;font-size:8.8px;line-height:8.8px;color:#444;transform:scaleX(1.0050);transform-origin:0 0;">Experimental</div>
<div class="a" style="left:711.9px;top:558.65px;font-size:8.8px;line-height:8.8px;color:#444;transform:scaleX(0.9888);transform-origin:0 0;">30 fps</div>
<div class="a" style="left:5.5px;top:560.85px;font-size:8.8px;line-height:8.8px;color:#444;transform:scaleX(0.9398);transform-origin:0 0;">Reset</div>
</body></html>
